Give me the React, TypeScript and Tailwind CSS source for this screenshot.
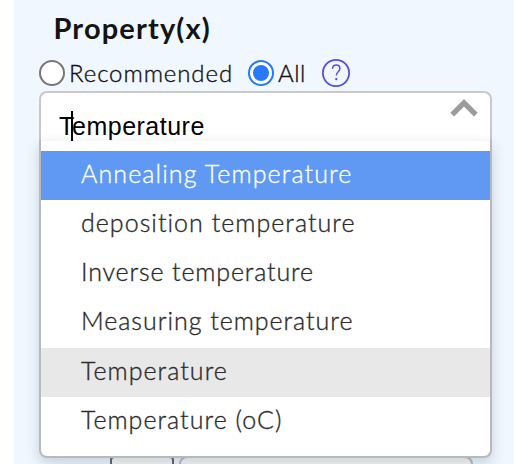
const options = [
  { label: 'Annealing Temperature', row: 'h-[49px] bg-[#5f99f3] text-white', text: 'tracking-[1.12px]' },
  { label: 'deposition temperature', row: 'h-[49px]', text: 'tracking-[1.03px]' },
  { label: 'Inverse temperature', row: 'h-[49px]', text: 'tracking-[0.85px]' },
  { label: 'Measuring temperature', row: 'h-[50px]', text: 'tracking-[0.97px]' },
  { label: 'Temperature', row: 'h-[49px] bg-[#e8e8e8]', text: 'tracking-[1.05px]' },
  { label: 'Temperature (oC)', row: 'h-[49px]', text: 'tracking-[1.03px]' },
];

function Radio({ checked = false }: { checked?: boolean }) {
  return (
    <span
      role="radio"
      aria-checked={checked}
      className={`flex size-[26px] shrink-0 items-center justify-center rounded-full border-2 bg-white ${
        checked ? 'border-[#2878f8]' : 'border-[#777777]'
      }`}
    >
      {checked && <span className="size-4 rounded-full bg-[#2878f8]" />}
    </span>
  );
}

export default function App() {
  return (
    <div className="h-[464px] w-[514px] overflow-hidden bg-white pl-3.5 font-['Lato',sans-serif]">
      <div className="h-full bg-[#f0f7ff] pl-[25px]">
        <h2 className="h-[60px] pl-[14.5px] pt-[8px] text-[29px] font-bold leading-[40px] tracking-[1.15px] text-[#141414]">
          Property(x)
        </h2>
        <div className="flex h-[26px] items-center text-[24px] font-light leading-[26px] text-[#111111] [-webkit-text-stroke:0.35px_currentColor]">
          <Radio />
          <span className="ml-1 w-[179px] shrink-0 tracking-[0.9px]">Recommended</span>
          <Radio checked />
          <span className="ml-1 w-[44px] shrink-0 tracking-[0.5px]">All</span>
          <svg width="28" height="28" viewBox="0 0 28 28" fill="none" stroke="#564fd8" className="shrink-0">
            <circle cx="14" cy="14" r="13.1" strokeWidth="1.8" />
            <path d="M10.5 9.7C10.7 7.3 12.1 6.1 14.2 6.1c2.2 0 3.7 1.4 3.7 3.4 0 3.4-3.6 3.3-3.6 7.1" strokeWidth="1.5" />
            <circle cx="14.3" cy="20.1" r="1.2" fill="#564fd8" stroke="none" />
          </svg>
        </div>
        <div className="relative mt-[5px] h-[49px] w-[453px] rounded-t-[8px] border-2 border-b-0 border-[#c9c9cb] bg-white">
          <div className="flex h-full justify-between pl-[18px] pr-[12px]">
            <span className="pt-[18px] font-['Liberation_Sans',sans-serif] text-[25px] leading-[30px] tracking-[0.5px] text-black">
              Temperature
            </span>
            <svg width="28" height="20" viewBox="0 0 28 20" className="mt-[5px]" fill="none" stroke="#9c9c9c" strokeWidth="5.4">
              <path d="M2.2 16.6 14 4.8 25.8 16.6" />
            </svg>
          </div>
          <span className="absolute left-[30px] top-[18px] z-20 h-[30px] w-0.5 bg-black" />
        </div>
        <div className="relative z-10 h-[318px] w-[453px] rounded-b-[8px] border-2 border-t-0 border-[#b9b9b9] bg-white pt-[11px] text-[25px] font-light text-[#2b2b2b] shadow-[0_6px_14px_rgba(40,60,100,0.2)] [-webkit-text-stroke:0.35px_currentColor]">
          <div className="absolute inset-x-0 top-0 h-px bg-[#f7f7f7]" />
          {options.map((option) => (
            <div key={option.label} className={`pl-10 leading-[45px] ${option.row}`}>
              <span className={option.text}>{option.label}</span>
            </div>
          ))}
        </div>
        <div className="-mt-0.5 flex pl-[71px]">
          <div className="h-[20px] w-[64px] rounded-[4px] border-2 border-[#666666] bg-[#f8f8f8]" />
          <div className="ml-[5px] h-[20px] w-[294px] rounded-[8px] border-2 border-[#bbbbbb] bg-[#f8f8f8]" />
        </div>
      </div>
    </div>
  );
}
